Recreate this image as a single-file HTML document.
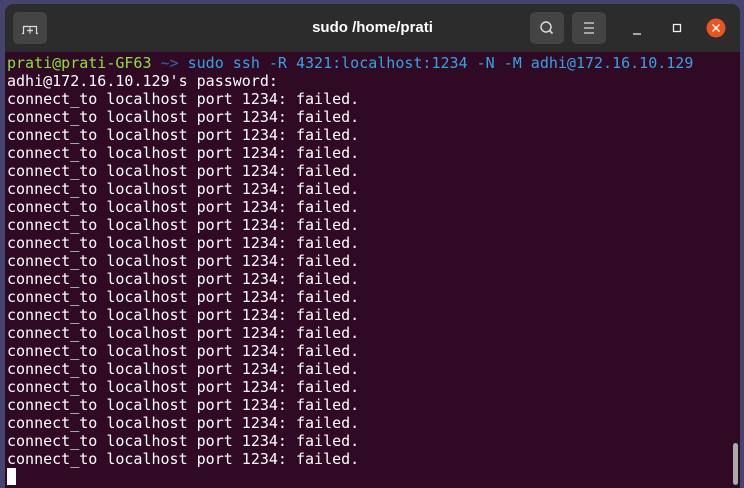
<!DOCTYPE html>
<html><head><style>
body{margin:0;width:744px;height:488px;background:#45446e;overflow:hidden;position:relative;font-family:"Liberation Sans",sans-serif}
.win{position:absolute;left:5px;top:4px;width:735px;height:484px;background:#300a24;border-radius:9px 9px 0 0;overflow:hidden}
.tb{position:absolute;left:0;top:0;width:100%;height:48px;background:#2c2c2c}
.btn{position:absolute;top:8px;width:34px;height:32px;background:#444;border-radius:5px}
.title{position:absolute;left:0;width:100%;top:15px;text-align:center;color:#fff;font-weight:bold;font-size:15px}
pre{position:absolute;left:2px;top:50px;margin:0;font-family:"DejaVu Sans Mono","Liberation Mono",monospace;font-size:15px;line-height:18px;color:#fff}
.g{color:#8ae234}.b{color:#3465a4}.c{color:#34a3e6}
.cur{display:inline-block;width:9px;height:17px;background:#fff;vertical-align:top}
.sb{position:absolute;left:728px;top:439px;width:5px;height:42px;background:#aaa;border-radius:3px}
</style></head><body>
<div class="win">
<div class="tb">
<div class="btn" style="left:8px"><svg width="34" height="32"><path d="M10.5 22V14.5h13V22M9 21.5h1.5M23.5 21.5H25M17 15.5v6M14 18.5h6" stroke="#ddd" stroke-width="1.2" fill="none"/></svg></div>
<div class="title">sudo /home/prati</div>
<div class="btn" style="left:525px"><svg width="34" height="32"><circle cx="16" cy="15" r="5" stroke="#ddd" stroke-width="1.4" fill="none"/><path d="M19.5 18.5l3 3" stroke="#ddd" stroke-width="1.6"/></svg></div>
<div class="btn" style="left:567px"><svg width="34" height="32"><path d="M12 11h10M12 16h10M12 21h10" stroke="#ddd" stroke-width="1.2"/></svg></div>
<svg style="position:absolute;left:620px;top:12px" width="120" height="26"><path d="M8 18h8" stroke="#eee" stroke-width="1.3"/><rect x="48.5" y="8.5" width="7" height="7" stroke="#eee" stroke-width="1.3" fill="none"/><circle cx="91" cy="12" r="9.5" fill="#e95420"/><path d="M87.5 8.5l7 7M94.5 8.5l-7 7" stroke="#fff" stroke-width="1.5"/></svg>
</div>
<pre><span class="g">prati@prati-GF63</span> <span class="b">~&gt;</span> <span class="c">sudo ssh -R 4321:localhost:1234 -N -M adhi@172.16.10.129</span>
adhi@172.16.10.129's password:
connect_to localhost port 1234: failed.
connect_to localhost port 1234: failed.
connect_to localhost port 1234: failed.
connect_to localhost port 1234: failed.
connect_to localhost port 1234: failed.
connect_to localhost port 1234: failed.
connect_to localhost port 1234: failed.
connect_to localhost port 1234: failed.
connect_to localhost port 1234: failed.
connect_to localhost port 1234: failed.
connect_to localhost port 1234: failed.
connect_to localhost port 1234: failed.
connect_to localhost port 1234: failed.
connect_to localhost port 1234: failed.
connect_to localhost port 1234: failed.
connect_to localhost port 1234: failed.
connect_to localhost port 1234: failed.
connect_to localhost port 1234: failed.
connect_to localhost port 1234: failed.
connect_to localhost port 1234: failed.
connect_to localhost port 1234: failed.
<span class="cur"></span></pre>
<div class="sb"></div>
</div>
</body></html>
